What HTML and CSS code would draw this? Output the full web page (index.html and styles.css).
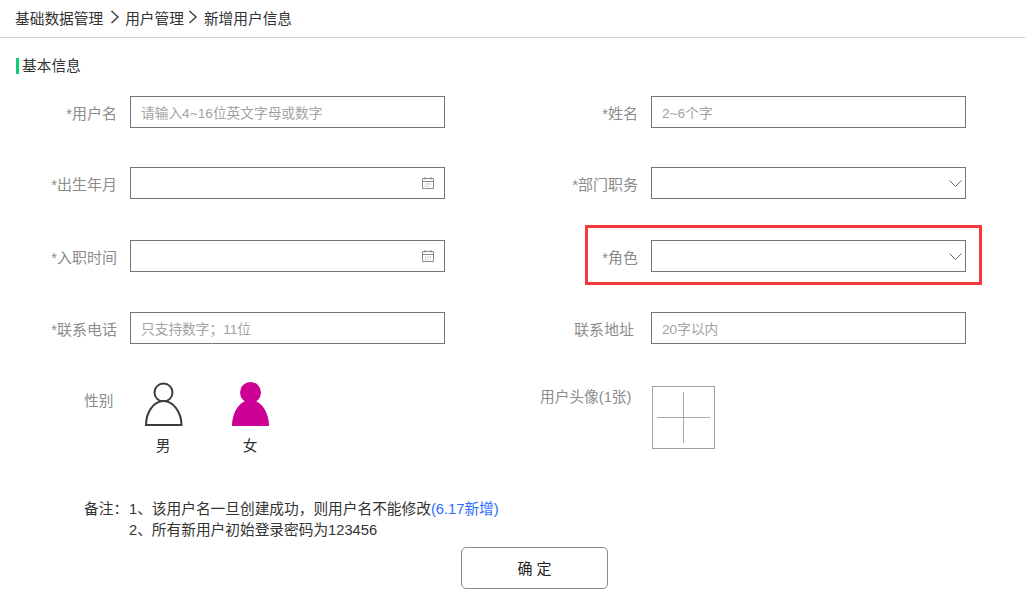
FILE: index.html
```html
<!DOCTYPE html>
<html lang="zh-CN">
<head>
<meta charset="utf-8">
<title>新增用户信息</title>
<link rel="stylesheet" href="styles.css">
</head>
<body>
<header class="crumbs">
  <span>基础数据管理</span>
  <svg class="crumb-arrow" viewBox="0 0 10 14"><path d="M1.500 1l6.500 6-6.500 6"/></svg>
  <span>用户管理</span>
  <svg class="crumb-arrow crumb-arrow-tight" viewBox="0 0 10 14"><path d="M1.500 1l6.500 6-6.500 6"/></svg>
  <span>新增用户信息</span>
</header>
<main class="page">
  <h2 class="section-title">基本信息</h2>
  <form class="form-grid">
    <div class="field"><label class="label">*用户名</label><div class="box"><span class="ph">请输入4~16位英文字母或数字</span></div></div>
    <div class="field"><label class="label">*姓名</label><div class="box"><span class="ph">2~6个字</span></div></div>

    <div class="field"><label class="label">*出生年月</label><div class="box box-cal"><svg class="cal" viewBox="0 0 14 14"><path d="M1.500 2.500h11v10h-11zM1.500 5.500h11M4 1v2.500M10 1v2.500"/><path class="dots" d="M4 8h1.400M6.300 8h1.400M8.600 8h1.400M4 10.300h1.400M6.300 10.300h1.400"/></svg></div></div>
    <div class="field"><label class="label">*部门职务</label><div class="box box-select"><svg class="chev" viewBox="0 0 13 7"><path d="M.5.500l6 6 6-6"/></svg></div></div>

    <div class="field"><label class="label">*入职时间</label><div class="box box-cal"><svg class="cal" viewBox="0 0 14 14"><path d="M1.500 2.500h11v10h-11zM1.500 5.500h11M4 1v2.500M10 1v2.500"/><path class="dots" d="M4 8h1.400M6.300 8h1.400M8.600 8h1.400M4 10.300h1.400M6.300 10.300h1.400"/></svg></div></div>
    <div class="field field-marked"><label class="label">*角色</label><div class="box box-select"><svg class="chev" viewBox="0 0 13 7"><path d="M.5.500l6 6 6-6"/></svg></div></div>

    <div class="field"><label class="label">*联系电话</label><div class="box"><span class="ph">只支持数字；11位</span></div></div>
    <div class="field"><label class="label label-plain">联系地址</label><div class="box"><span class="ph">20字以内</span></div></div>
  </form>

  <section class="lower">
    <div class="gender">
      <span class="gender-label">性别</span>
      <div class="person">
        <svg class="person-icon" viewBox="0 0 38 44"><circle class="outline" cx="18.500" cy="10.500" r="9"/><path class="outline" d="M1 43c0-13 8-24 17.500-24S36.500 30 36.500 43z"/></svg>
        <span>男</span>
      </div>
      <div class="person">
        <svg class="person-icon" viewBox="0 0 38 44"><circle class="solid" cx="18.500" cy="10.500" r="10.500"/><path class="solid" d="M0 44c0-14 8-26 18.500-26S37 30 37 44z"/></svg>
        <span>女</span>
      </div>
    </div>
    <div class="avatar">
      <span class="avatar-label">用户头像(1张)</span>
      <div class="upload"><span class="plus-h"></span><span class="plus-v"></span></div>
    </div>
  </section>

  <section class="notes">
    <span class="notes-head">备注：</span>
    <div class="notes-body">
      <p>1、该用户名一旦创建成功，则用户名不能修改<span class="tag">(6.17新增)</span></p>
      <p>2、所有新用户初始登录密码为123456</p>
    </div>
  </section>
  <div class="actions"><button type="button" class="confirm">确 定</button></div>
</main>
</body>
</html>
```
FILE: styles.css
```css
*, *::after { box-sizing: border-box; }
html, body { margin: 0; padding: 0; }
body {
  width: 1025px;
  height: 610px;
  overflow: hidden;
  background: #fff;
  color: #333;
  font-family: "Liberation Sans", "Noto Sans CJK SC", sans-serif;
  font-size: 14.700px;
}
.crumbs {
  height: 38px;
  border-bottom: 1px solid #ccc;
  padding-left: 15px;
  padding-bottom: 3px;
  display: flex;
  align-items: center;
  font-size: 14.700px;
  color: #333;
}
.crumb-arrow { width: 10px; height: 14px; fill: none; stroke: #444; stroke-width: 1.500; margin: 0 5px 0 7px; flex: none; }
.crumb-arrow-tight { margin: 0 6px 0 4px; }
.page { padding: 20px 0 0 16px; }
.section-title {
  margin: 0;
  height: 16px;
  line-height: 16px;
  border-left: 3px solid #0fcf73;
  padding-left: 3px;
  font-size: 14.700px;
  font-weight: 400;
  color: #333;
}
.form-grid {
  margin-top: 22px;
  display: grid;
  grid-template-columns: 521px 450px;
  grid-template-rows: 71px 73px 72px 32px;
}
.field { display: flex; align-items: flex-start; position: relative; }
.label {
  width: 101px;
  margin-right: 13px;
  height: 32px;
  line-height: 35px;
  text-align: right;
  font-size: 15px;
  color: #8c8c8c;
}
.label-plain { padding-right: 4px; }
.box {
  width: 315px;
  height: 32px;
  border: 1px solid #757575;
  display: flex;
  align-items: center;
  padding: 0 10px;
  background: #fff;
}
.box-cal { justify-content: flex-end; padding: 0 9px 0 0; }
.box-select { justify-content: flex-end; padding: 0 3px 0 0; }
.ph { font-size: 13.700px; color: #a3a3a3; }
.cal { width: 14px; height: 14px; fill: none; stroke: #8a8a8a; stroke-width: 1; }
.cal .dots { stroke: #aaa; }
.chev { width: 13px; height: 7px; fill: none; stroke: #666; stroke-width: 1; }
.field-marked::after {
  content: "";
  position: absolute;
  left: 48px;
  top: -15px;
  width: 397px;
  height: 60px;
  border: 3px solid #f43a3a;
  pointer-events: none;
}
.lower { display: flex; margin-top: 38px; height: 80px; }
.gender { width: 521px; display: flex; align-items: flex-start; }
.gender-label { width: 97px; margin-top: 7px; padding-left: 68px; color: #8c8c8c; white-space: nowrap; }
.person { width: 87px; margin-left: 32px; margin-right: -32px; display: flex; flex-direction: column; align-items: flex-start; color: #333; }
.person span { width: 36px; text-align: center; margin-top: 10px; line-height: 20px; }
.person-icon { width: 38px; height: 44px; display: block; }
.outline { fill: #fff; stroke: #3c3c3c; stroke-width: 2; }
.solid { fill: #cc0095; }
.avatar { display: flex; align-items: flex-start; margin-left: 3px; }
.avatar-label { width: 112px; margin-top: 3px; color: #8c8c8c; white-space: nowrap; }
.upload { width: 63px; height: 63px; border: 1px solid #a0a0a0; position: relative; margin-top: 4px; }
.plus-h { position: absolute; left: 4px; right: 4px; top: 30px; height: 1px; background: #aaa; }
.plus-v { position: absolute; top: 5px; bottom: 5px; left: 30px; width: 1px; background: #aaa; }
.notes { display: flex; margin-top: 37px; margin-left: 68px; color: #333; line-height: 21px; }
.notes-head { width: 45px; }
.notes-body p { margin: 0; }
.tag { color: #2d6bff; }
.actions { margin-top: 6px; margin-left: 445px; }
.confirm {
  width: 147px;
  height: 42px;
  background: #fff;
  border: 1px solid #8a8a8a;
  border-radius: 5px;
  font-family: inherit;
  font-size: 15px;
  color: #222;
  padding: 0 0 2px;
}
```
